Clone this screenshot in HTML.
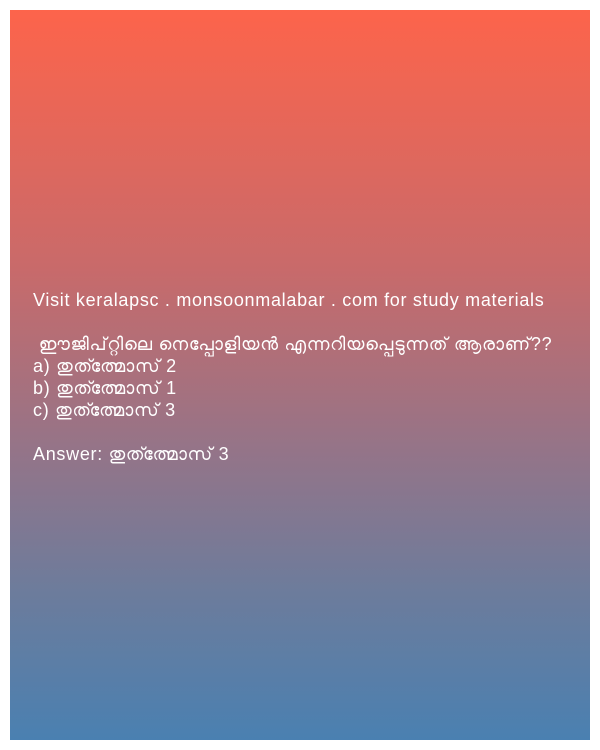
<!DOCTYPE html>
<html><head><meta charset="utf-8"><style>
html,body{margin:0;padding:0;width:600px;height:750px;background:#fff;overflow:hidden}
.box{position:absolute;left:10px;top:10px;width:580px;height:730px;background:linear-gradient(to bottom,#fd644b 0%,#c96a6a 35%,#957488 60%,#6c7c9c 80%,#4a80b1 100%)}
.t{position:absolute;left:23px;top:279px;color:#fff;font-family:"Liberation Sans","Noto Sans CJK JP",sans-serif;font-size:18px;line-height:22px;letter-spacing:0.7px;white-space:pre}
</style></head><body>
<div class="box"><div class="t">Visit keralapsc . monsoonmalabar . com for study materials

 ഈജിപ്റ്റിലെ നെപ്പോളിയൻ എന്നറിയപ്പെടുന്നത് ആരാണ്??
a) തുത്ത്മോസ് 2
b) തുത്ത്മോസ് 1
c) തുത്ത്മോസ് 3

Answer: തുത്ത്മോസ് 3</div></div>
</body></html>
